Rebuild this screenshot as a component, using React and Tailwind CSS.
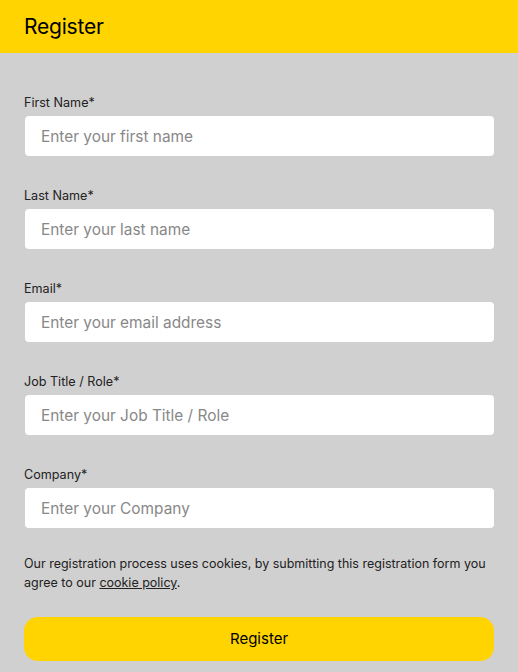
export default function App() {
  const fields = [
    ["First Name*", "Enter your first name"],
    ["Last Name*", "Enter your last name"],
    ["Email*", "Enter your email address"],
    ["Job Title / Role*", "Enter your Job Title / Role"],
    ["Company*", "Enter your Company"],
  ];
  return (
    <div className="w-[518px] h-[672px] bg-[#d0d0d0] font-['Inter',sans-serif] overflow-hidden">
      <div className="h-[53px] bg-[#ffd400] flex items-center px-6">
        <h1 className="text-[21px] text-black tracking-[-0.2px]">Register</h1>
      </div>
      <div className="px-6 pt-[42px]">
        {fields.map(([label, ph]) => (
          <div key={label} className="mb-[32px]">
            <label className="block text-[12.6px] leading-4 text-[#222] mb-[5px]">{label}</label>
            <input
              className="block w-[469px] h-10 ml-px rounded bg-white px-4 text-[15.4px] text-[#222] placeholder:text-[#888] outline-none"
              placeholder={ph}
            />
          </div>
        ))}
        <p className="-mt-[6px] text-[12.5px] leading-[19px] text-[#222]">
          Our registration process uses cookies, by submitting this registration form you agree to our{" "}
          <a className="underline">cookie policy</a>.
        </p>
        <button className="mt-[25px] w-[470px] h-11 rounded-[14px] bg-[#ffd400] text-[15px] text-black">
          Register
        </button>
      </div>
    </div>
  );
}
